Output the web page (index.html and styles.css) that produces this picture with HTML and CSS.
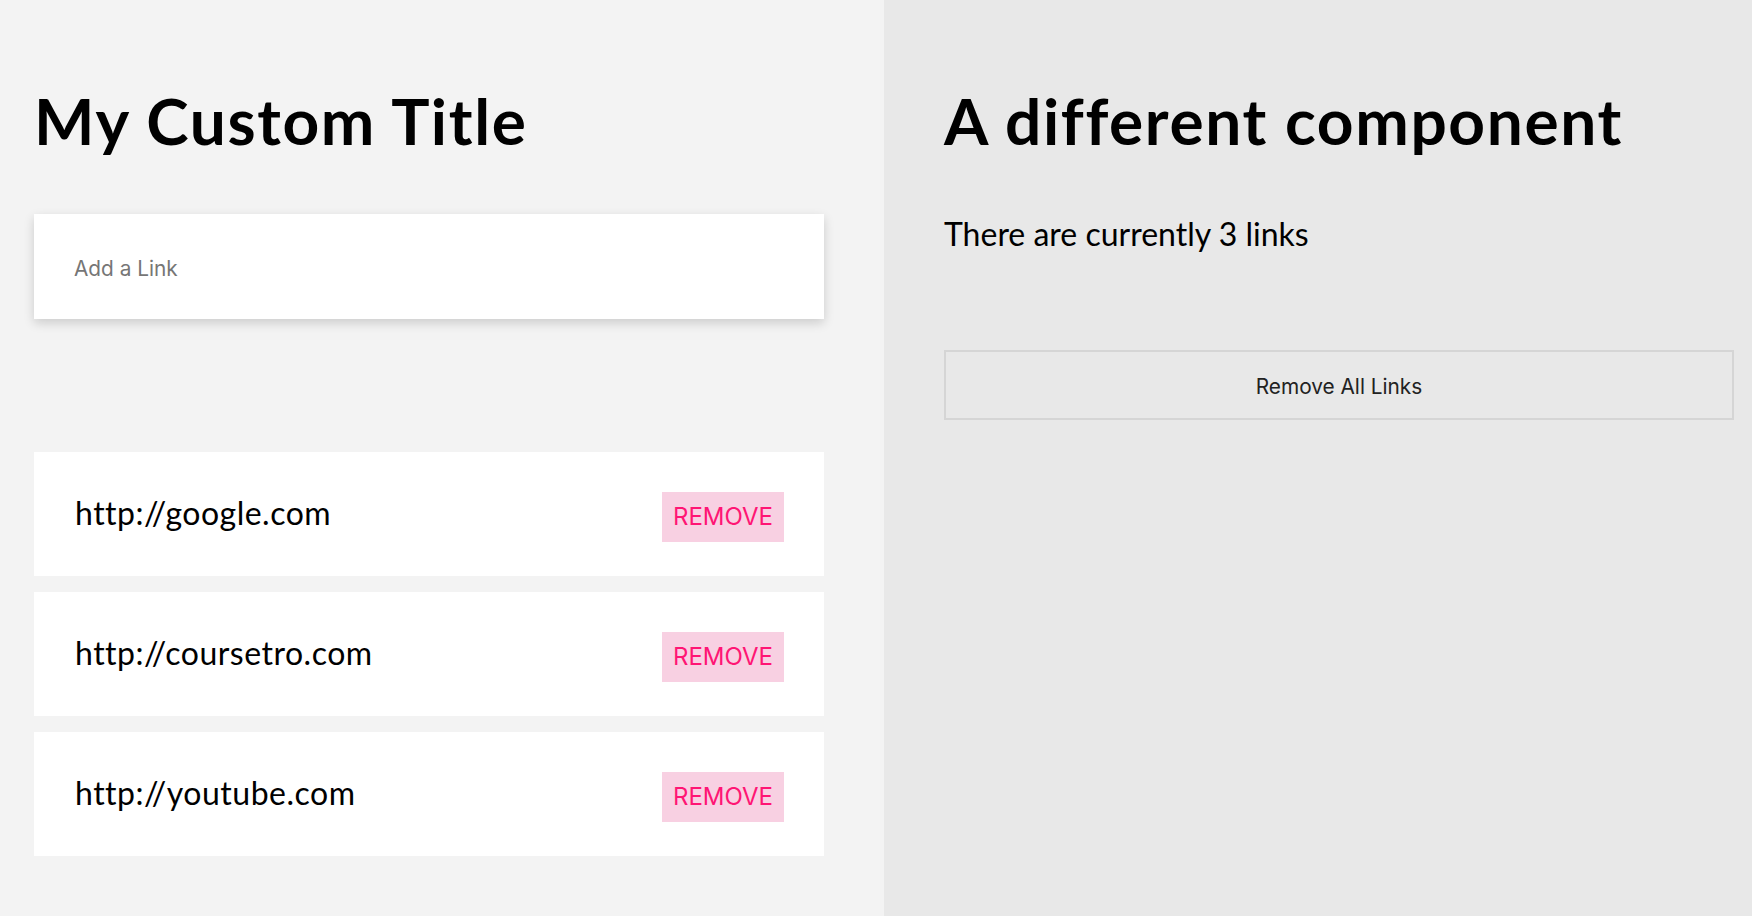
FILE: index.html
```html
<!DOCTYPE html>
<html lang="en">
<head>
<meta charset="utf-8">
<title>Links</title>
<link rel="stylesheet" href="styles.css">
</head>
<body>
<div class="app">
  <section class="panel panel-left">
    <h1 class="title">My Custom Title</h1>
    <input class="link-input" type="text" placeholder="Add a Link">
    <ul class="link-list">
      <li class="link-item"><span class="link-url">http://google.com</span><button class="remove-btn">REMOVE</button></li>
      <li class="link-item"><span class="link-url">http://coursetro.com</span><button class="remove-btn">REMOVE</button></li>
      <li class="link-item"><span class="link-url">http://youtube.com</span><button class="remove-btn">REMOVE</button></li>
    </ul>
  </section>
  <section class="panel panel-right">
    <h1 class="title">A different component</h1>
    <p class="count">There are currently 3 links</p>
    <button class="remove-all">Remove All Links</button>
  </section>
</div>
</body>
</html>
```
FILE: styles.css
```css
html, body {
  margin: 0;
  padding: 0;
  height: 100%;
}
body {
  font-family: Lato, "Noto Sans", sans-serif;
  color: #000;
}
.app {
  display: flex;
  height: 916px;
  overflow: hidden;
}
.panel {
  box-sizing: border-box;
  padding-top: 83px;
}
.panel-left {
  width: 884px;
  flex: none;
  background: #f3f3f3;
  padding-left: 34px;
  padding-right: 60px;
}
.panel-right {
  flex: 1;
  background: #e8e8e8;
  padding-left: 60px;
  padding-right: 18px;
}
.title {
  margin: 0;
  font-family: Lato, "Noto Sans", sans-serif;
  font-weight: 700;
  font-size: 64px;
  line-height: 76px;
  letter-spacing: 1.6px;
  white-space: nowrap;
}
.link-input {
  display: block;
  box-sizing: border-box;
  width: 790px;
  height: 105px;
  margin: 55px 0 0;
  padding: 4px 40px 0;
  border: none;
  outline: none;
  background: #fff;
  box-shadow: 0 4px 10px rgba(0, 0, 0, 0.16);
  font-family: Inter, "Noto Sans", sans-serif;
  font-size: 20.8px;
  color: #222;
}
.link-input::placeholder {
  color: #767676;
}
.link-list {
  list-style: none;
  margin: 133px 0 0;
  padding: 0;
  display: flex;
  flex-direction: column;
  gap: 16px;
}
.link-item {
  box-sizing: border-box;
  height: 124px;
  background: #fff;
  padding: 41px 40px 0 41px;
  display: flex;
  justify-content: space-between;
  align-items: flex-start;
}
.link-url {
  font-size: 32px;
  line-height: 40px;
  letter-spacing: 0.5px;
}
.remove-btn {
  width: 122px;
  height: 50px;
  margin-top: -1px;
  border: none;
  padding: 0;
  background: #f8d0e2;
  color: #ff1574;
  font-family: Inter, "Noto Sans", sans-serif;
  font-size: 24px;
  line-height: 50px;
  cursor: pointer;
}
.count {
  margin: 55px 0 0;
  font-size: 32px;
  line-height: 40px;
}
.remove-all {
  display: block;
  box-sizing: border-box;
  width: 790px;
  height: 70px;
  margin-top: 96px;
  padding: 2px 0 0;
  border: 2px solid #d5d5d5;
  background: transparent;
  font-family: Inter, "Noto Sans", sans-serif;
  font-size: 20.8px;
  color: #222;
  cursor: pointer;
}
```
